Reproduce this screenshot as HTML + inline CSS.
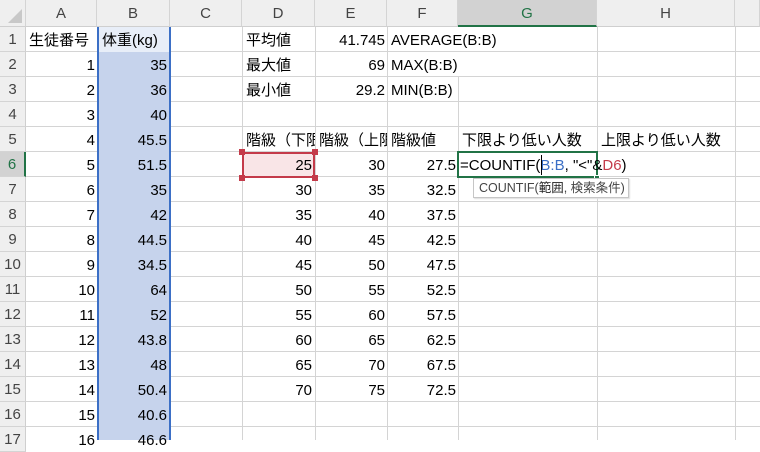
<!DOCTYPE html>
<html><head><meta charset="utf-8"><style>
*{margin:0;padding:0;box-sizing:border-box}
body{width:760px;height:440px;overflow:hidden;background:#fff;position:relative;font-family:"Liberation Sans","Noto Sans CJK JP",sans-serif;color:#000}
.a{position:absolute}
.h{position:absolute;top:0;height:27px;line-height:28px;text-align:center;font-size:15px;color:#444;background:#efefef;border-right:1px solid #d4d4d4;border-bottom:1px solid #cfcfcf}
.rh{position:absolute;left:0;width:26px;height:25px;line-height:25px;text-align:center;font-size:15px;color:#444;background:#efefef;border-bottom:1px solid #d4d4d4;border-right:1px solid #cfcfcf}
.v{position:absolute;top:27px;height:413px;width:1px;background:#d4d4d4}
.t{position:absolute;height:24px;line-height:25px;font-size:15px;white-space:nowrap;overflow:hidden}
.r{text-align:right;padding-right:2px}
.l{padding-left:3px}
</style></head><body>
<div class="a" style="left:26px;top:27px;width:734px;height:413px;background:repeating-linear-gradient(to bottom,transparent 0,transparent 24px,#d4d4d4 24px,#d4d4d4 25px)"></div>
<div class="v" style="left:97px"></div><div class="v" style="left:170px"></div><div class="v" style="left:242px"></div><div class="v" style="left:315px"></div><div class="v" style="left:387px"></div><div class="v" style="left:458px"></div><div class="v" style="left:597px"></div><div class="v" style="left:735px"></div>
<div class="a" style="left:458px;top:27px;width:1px;height:24px;background:#fff"></div>
<div class="a" style="left:458px;top:52px;width:1px;height:24px;background:#fff"></div>
<div class="a" style="left:97px;top:27px;width:74px;height:413px;background:#c6d3ec;border-left:2px solid #3b6fc6;border-right:2px solid #3b6fc6"></div>
<div class="a" style="left:99px;top:27px;width:70px;height:25px;background:#e8eef8"></div>
<div class="h" style="left:0;width:26px;background:#efefef"><div class="a" style="left:8px;top:9px;width:0;height:0;border-left:14px solid transparent;border-bottom:14px solid #c8c8c8"></div></div>
<div class="h" style="left:26px;width:71px">A</div>
<div class="h" style="left:97px;width:73px">B</div>
<div class="h" style="left:170px;width:72px">C</div>
<div class="h" style="left:242px;width:73px">D</div>
<div class="h" style="left:315px;width:72px">E</div>
<div class="h" style="left:387px;width:71px">F</div>
<div class="h" style="left:458px;width:139px;background:#d2d2d2;border-bottom:2px solid #217346;color:#217346">G</div>
<div class="h" style="left:597px;width:138px">H</div>
<div class="h" style="left:735px;width:25px"></div>
<div class="rh" style="top:27px">1</div><div class="rh" style="top:52px">2</div><div class="rh" style="top:77px">3</div><div class="rh" style="top:102px">4</div><div class="rh" style="top:127px">5</div>
<div class="rh" style="top:152px;background:#d2d2d2;border-right:2px solid #217346;color:#217346">6</div>
<div class="rh" style="top:177px">7</div><div class="rh" style="top:202px">8</div><div class="rh" style="top:227px">9</div><div class="rh" style="top:252px">10</div><div class="rh" style="top:277px">11</div><div class="rh" style="top:302px">12</div><div class="rh" style="top:327px">13</div><div class="rh" style="top:352px">14</div><div class="rh" style="top:377px">15</div><div class="rh" style="top:402px">16</div><div class="rh" style="top:427px">17</div>
<div class="t l" style="left:26px;top:28px;width:71px">生徒番号</div>
<div class="t l" style="left:99px;top:28px;width:70px">体重(kg)</div>
<div class="t r" style="left:26px;top:53px;width:71px">1</div><div class="t r" style="left:99px;top:53px;width:70px">35</div>
<div class="t r" style="left:26px;top:78px;width:71px">2</div><div class="t r" style="left:99px;top:78px;width:70px">36</div>
<div class="t r" style="left:26px;top:103px;width:71px">3</div><div class="t r" style="left:99px;top:103px;width:70px">40</div>
<div class="t r" style="left:26px;top:128px;width:71px">4</div><div class="t r" style="left:99px;top:128px;width:70px">45.5</div>
<div class="t r" style="left:26px;top:153px;width:71px">5</div><div class="t r" style="left:99px;top:153px;width:70px">51.5</div>
<div class="t r" style="left:26px;top:178px;width:71px">6</div><div class="t r" style="left:99px;top:178px;width:70px">35</div>
<div class="t r" style="left:26px;top:203px;width:71px">7</div><div class="t r" style="left:99px;top:203px;width:70px">42</div>
<div class="t r" style="left:26px;top:228px;width:71px">8</div><div class="t r" style="left:99px;top:228px;width:70px">44.5</div>
<div class="t r" style="left:26px;top:253px;width:71px">9</div><div class="t r" style="left:99px;top:253px;width:70px">34.5</div>
<div class="t r" style="left:26px;top:278px;width:71px">10</div><div class="t r" style="left:99px;top:278px;width:70px">64</div>
<div class="t r" style="left:26px;top:303px;width:71px">11</div><div class="t r" style="left:99px;top:303px;width:70px">52</div>
<div class="t r" style="left:26px;top:328px;width:71px">12</div><div class="t r" style="left:99px;top:328px;width:70px">43.8</div>
<div class="t r" style="left:26px;top:353px;width:71px">13</div><div class="t r" style="left:99px;top:353px;width:70px">48</div>
<div class="t r" style="left:26px;top:378px;width:71px">14</div><div class="t r" style="left:99px;top:378px;width:70px">50.4</div>
<div class="t r" style="left:26px;top:403px;width:71px">15</div><div class="t r" style="left:99px;top:403px;width:70px">40.6</div>
<div class="t r" style="left:26px;top:428px;width:71px">16</div><div class="t r" style="left:99px;top:428px;width:70px">46.6</div>
<div class="t l" style="left:243px;top:28px;width:72px">平均値</div><div class="t r" style="left:315px;top:28px;width:72px">41.745</div><div class="t l" style="left:388px;top:28px;width:130px">AVERAGE(B:B)</div>
<div class="t l" style="left:243px;top:53px;width:72px">最大値</div><div class="t r" style="left:315px;top:53px;width:72px">69</div><div class="t l" style="left:388px;top:53px;width:80px">MAX(B:B)</div>
<div class="t l" style="left:243px;top:78px;width:72px">最小値</div><div class="t r" style="left:315px;top:78px;width:72px">29.2</div><div class="t l" style="left:388px;top:78px;width:70px">MIN(B:B)</div>
<div class="t l" style="left:243px;top:128px;width:72px">階級（下限</div>
<div class="t l" style="left:316px;top:128px;width:71px">階級（上限</div>
<div class="t l" style="left:388px;top:128px;width:70px">階級値</div>
<div class="t l" style="left:459px;top:128px;width:138px">下限より低い人数</div>
<div class="t l" style="left:598px;top:128px;width:137px">上限より低い人数</div>
<div class="a" style="left:242px;top:152px;width:73px;height:26px;background:#f9e5e7;border:2px solid #c43b4a"></div>
<div class="a" style="left:239px;top:149px;width:6px;height:6px;background:#c43b4a"></div>
<div class="a" style="left:312px;top:149px;width:6px;height:6px;background:#c43b4a"></div>
<div class="a" style="left:239px;top:175px;width:6px;height:6px;background:#c43b4a"></div>
<div class="a" style="left:312px;top:175px;width:6px;height:6px;background:#c43b4a"></div>
<div class="t r" style="left:242px;top:153px;width:72px">25</div><div class="t r" style="left:315px;top:153px;width:72px">30</div><div class="t r" style="left:387px;top:153px;width:71px">27.5</div>
<div class="t r" style="left:242px;top:178px;width:72px">30</div><div class="t r" style="left:315px;top:178px;width:72px">35</div><div class="t r" style="left:387px;top:178px;width:71px">32.5</div>
<div class="t r" style="left:242px;top:203px;width:72px">35</div><div class="t r" style="left:315px;top:203px;width:72px">40</div><div class="t r" style="left:387px;top:203px;width:71px">37.5</div>
<div class="t r" style="left:242px;top:228px;width:72px">40</div><div class="t r" style="left:315px;top:228px;width:72px">45</div><div class="t r" style="left:387px;top:228px;width:71px">42.5</div>
<div class="t r" style="left:242px;top:253px;width:72px">45</div><div class="t r" style="left:315px;top:253px;width:72px">50</div><div class="t r" style="left:387px;top:253px;width:71px">47.5</div>
<div class="t r" style="left:242px;top:278px;width:72px">50</div><div class="t r" style="left:315px;top:278px;width:72px">55</div><div class="t r" style="left:387px;top:278px;width:71px">52.5</div>
<div class="t r" style="left:242px;top:303px;width:72px">55</div><div class="t r" style="left:315px;top:303px;width:72px">60</div><div class="t r" style="left:387px;top:303px;width:71px">57.5</div>
<div class="t r" style="left:242px;top:328px;width:72px">60</div><div class="t r" style="left:315px;top:328px;width:72px">65</div><div class="t r" style="left:387px;top:328px;width:71px">62.5</div>
<div class="t r" style="left:242px;top:353px;width:72px">65</div><div class="t r" style="left:315px;top:353px;width:72px">70</div><div class="t r" style="left:387px;top:353px;width:71px">67.5</div>
<div class="t r" style="left:242px;top:378px;width:72px">70</div><div class="t r" style="left:315px;top:378px;width:72px">75</div><div class="t r" style="left:387px;top:378px;width:71px">72.5</div>
<div class="a" style="left:598px;top:152px;width:50px;height:24px;background:#fff"></div>
<div class="a" style="left:457px;top:151px;width:141px;height:27px;border:2px solid #217346"></div>
<div class="a" style="left:594px;top:175px;width:6px;height:6px;background:#217346;border:1px solid #fff"></div>
<div class="t" style="left:460px;top:153px;width:200px;overflow:visible">=COUNTIF(<span style="color:#3b6fc6">B:B</span>, "&lt;"&amp;<span style="color:#c43b4a">D6</span>)</div>
<div class="a" style="left:541px;top:155px;width:1px;height:20px;background:#000"></div>
<div class="a" style="left:473px;top:178px;width:156px;height:20px;background:#fff;border:1px solid #c6c6c6;font-size:12.5px;line-height:18px;color:#444;padding-left:5px;white-space:nowrap;box-shadow:1px 1px 1px #ddd">COUNTIF(<span style="color:#222">範囲</span>, 検索条件)</div>
</body></html>
